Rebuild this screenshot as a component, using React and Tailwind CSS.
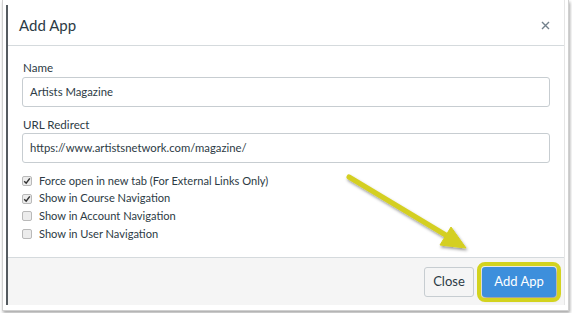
import React from "react";

const Check = ({ checked }) => (
  <span className="w-[10px] h-[10px] rounded-[2px] border border-[#b9b9b9] bg-[#ececec] flex items-center justify-center">
    {checked && (
      <svg width="8" height="8" viewBox="0 0 8 8">
        <path d="M1.2 4.2 L3.2 6.2 L6.8 1.4" fill="none" stroke="#333" strokeWidth="1.5" />
      </svg>
    )}
  </span>
);

const options = [
  { label: "Force open in new tab (For External Links Only)", checked: true },
  { label: "Show in Course Navigation", checked: true },
  { label: "Show in Account Navigation", checked: false },
  { label: "Show in User Navigation", checked: false },
];

const App = () => {
  return (
    <div className="w-[572px] h-[313px] bg-white relative overflow-hidden font-['Lato',sans-serif] text-[#2d3b45]">
      <div className="ml-[2px] w-[567px] h-[311px] border-x border-b border-[#d0d0d0] shadow-[1px_2px_3px_rgba(0,0,0,0.35)] pl-[3px] flex bg-white">
        <div className="w-[2px] bg-[#555b60] mt-[5px] h-[300px]" />
        <div className="w-[557px] h-[305px] flex flex-col border-r border-[#e6e6e6]">
          <div className="h-[46px] border-b border-[#d5dadd] flex items-center justify-between pl-[11px] pr-[14px] pt-[6px]">
            <h1 className="text-[15px] leading-none">Add App</h1>
            <svg width="9" height="9" viewBox="0 0 9 9">
              <path d="M1 1 L8 8 M8 1 L1 8" stroke="#73818c" strokeWidth="1.4" />
            </svg>
          </div>

          <div className="flex-1 px-[14px] pt-[14px]">
            <label className="block text-[11.6px] leading-4 pl-px mb-[1px]">Name</label>
            <div className="h-[30px] border border-[#c7cdd1] rounded-[3px] flex items-center px-[7px] text-[11.3px]">
              Artists Magazine
            </div>
            <label className="block text-[11.6px] leading-4 pl-px mt-[10px]">URL Redirect</label>
            <div className="h-[30px] border border-[#c7cdd1] rounded-[3px] flex items-center px-[7px] text-[11.3px]">
              https://www.artistsnetwork.com/magazine/
            </div>
            <div className="mt-[9px] flex flex-col">
              {options.map((o) => (
                <div key={o.label} className="h-[17.7px] flex items-center gap-[7px] text-[11.1px]">
                  <Check checked={o.checked} />
                  <span>{o.label}</span>
                </div>
              ))}
            </div>
          </div>

          <div className="h-[48px] border-t border-[#d5dadd] bg-[#f5f5f5] flex justify-end items-start gap-[8px] pr-[8px] pt-[9px]">
            <button className="h-[30px] w-[50px] border border-[#c7cdd1] rounded-[3px] bg-[#f5f5f5] text-[13px] text-[#2d3b45]">
              Close
            </button>
            <button className="h-[30px] w-[74px] rounded-[3px] bg-[#3d8fdc] text-[13px] text-white outline-4 outline-[#d3d31f] outline-offset-[1px] shadow-[1px_2px_4px_rgba(0,0,0,0.45)]">
              Add App
            </button>
          </div>
        </div>
      </div>

      <svg className="absolute left-0 top-0 pointer-events-none" width="572" height="313">
        <defs>
          <filter id="sh" x="-20%" y="-20%" width="140%" height="140%">
            <feDropShadow dx="1" dy="2" stdDeviation="1.5" floodColor="#000" floodOpacity="0.4" />
          </filter>
        </defs>
        <g filter="url(#sh)" fill="#d4cf23" stroke="#d4cf23">
          <line x1="349" y1="177" x2="449" y2="237" strokeWidth="5" strokeLinecap="round" />
          <polygon points="466,248 440,245 451,227" strokeWidth="1" strokeLinejoin="round" />
        </g>
      </svg>
    </div>
  );
};

export default App;
